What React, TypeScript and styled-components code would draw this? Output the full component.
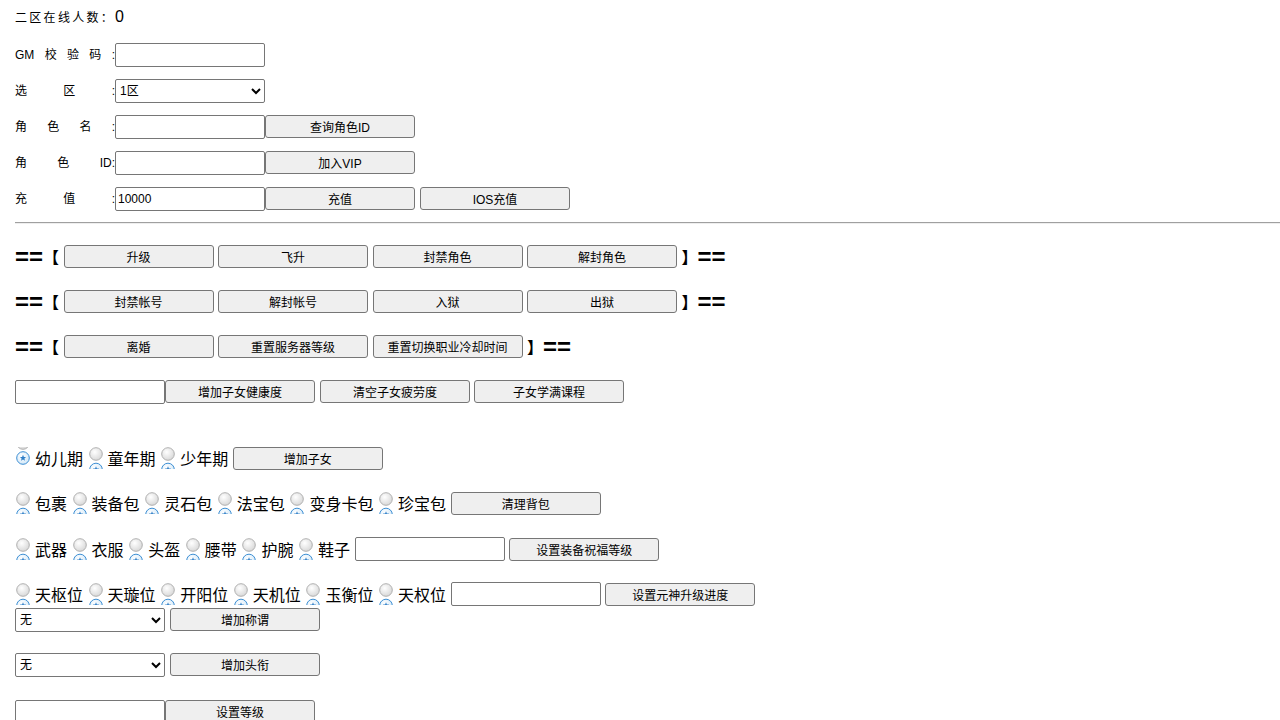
import React from "react";
import styled, { createGlobalStyle } from "styled-components";

const GlobalStyle = createGlobalStyle`
  body {
    margin: 0;
    background: #fff;
    color: #000;
    font-family: "Liberation Sans", "Noto Sans CJK SC", sans-serif;
  }
`;

const Page = styled.div`
  padding-left: 15px;
  width: 1265px;
`;

const Title = styled.div`
  padding-top: 8px;
  height: 20px;
  display: flex;
  align-items: baseline;
  font-size: 12px;
  letter-spacing: 2.3px;
`;

const Count = styled.span`
  font-size: 16px;
  letter-spacing: 0;
`;

const Row = styled.div<{ $top: number; $gap?: number }>`
  margin-top: ${(p) => p.$top}px;
  height: 24px;
  display: flex;
  align-items: flex-start;
  gap: ${(p) => p.$gap ?? 0}px;
`;

const Label = styled.div`
  width: 100px;
  align-self: center;
  display: flex;
  align-items: baseline;
  justify-content: space-between;
  font-size: 12px;
  line-height: 16px;
`;

const TextInput = styled.input`
  box-sizing: border-box;
  width: 150px;
  height: 24px;
  border: 1px solid #767676;
  border-radius: 2px;
  padding: 1px 2px;
  font-size: 12px;
  font-family: "Liberation Sans", "Noto Sans CJK SC", sans-serif;
  color: #000;
  background: #fff;
`;

const Select = styled.select`
  box-sizing: border-box;
  width: 150px;
  height: 24px;
  border: 1px solid #767676;
  border-radius: 2px;
  font-size: 12px;
  font-family: "Liberation Sans", "Noto Sans CJK SC", sans-serif;
  color: #000;
  background: #fff;
`;

const Button = styled.button<{ $ml?: number }>`
  box-sizing: border-box;
  width: 150px;
  height: 23px;
  margin-left: ${(p) => p.$ml ?? 0}px;
  border: 1px solid #767676;
  border-radius: 3px;
  background: #efefef;
  color: #000;
  padding: 0;
  font-size: 12px;
  font-family: "Liberation Sans", "Noto Sans CJK SC", sans-serif;
`;

const Divider = styled.div`
  margin-top: 11px;
  border-top: 1px solid #a0a0a0;
  border-bottom: 1px solid #eeeeee;
`;

const Mark = styled.span`
  display: inline-flex;
  align-items: center;
  height: 23px;
  white-space: pre;
`;

const Equals = styled.span`
  font-size: 24px;
  font-weight: bold;
  font-family: "Liberation Sans", sans-serif;
  line-height: 23px;
`;

const Bracket = styled.span`
  font-size: 16px;
  font-weight: bold;
  font-family: "Noto Sans CJK SC", sans-serif;
  line-height: 23px;
`;

const RadioRow = styled.div<{ $top: number }>`
  margin-top: ${(p) => p.$top}px;
  height: 24px;
  display: flex;
  align-items: center;
  gap: 4.6px;
  font-size: 16px;
  line-height: 20px;
  font-family: "Noto Sans CJK SC", sans-serif;
`;

const Option = styled.label`
  display: inline-flex;
  align-items: center;
  gap: 4px;
`;

function RadioIcon({ checked }: { checked?: boolean }) {
  const grayY = checked ? -4 : 7;
  const blueY = checked ? 11 : 22.5;
  return (
    <svg width="16" height="22" viewBox="0 0 16 22">
      <defs>
        <radialGradient id="rg" cx="0.4" cy="0.35" r="0.7">
          <stop offset="0" stopColor="#ffffff" />
          <stop offset="1" stopColor="#d6d6d6" />
        </radialGradient>
        <radialGradient id="rb" cx="0.4" cy="0.35" r="0.7">
          <stop offset="0" stopColor="#ffffff" />
          <stop offset="1" stopColor="#cfe6f7" />
        </radialGradient>
      </defs>
      <circle cx="8" cy={grayY} r="6.3" fill="url(#rg)" stroke="#b0b0b0" strokeWidth="1" />
      <circle cx="8" cy={blueY} r="6.3" fill="url(#rb)" stroke="#3d8fd4" strokeWidth="1" />
      <polygon
        transform={`translate(8 ${blueY})`}
        points="0,-3.2 0.9,-1 3.1,-1 1.4,0.5 2,2.8 0,1.4 -2,2.8 -1.4,0.5 -3.1,-1 -0.9,-1"
        fill="#2f7fc8"
      />
    </svg>
  );
}

function Radio({ label, checked }: { label: string; checked?: boolean }) {
  return (
    <Option>
      <RadioIcon checked={checked} />
      {label}
    </Option>
  );
}

function FormLabel({ parts }: { parts: string[] }) {
  return (
    <Label>
      {parts.map((p, i) => (
        <span key={i}>{p}</span>
      ))}
    </Label>
  );
}

function BracketRow({ top, names }: { top: number; names: string[] }) {
  return (
    <Row $top={top} $gap={4.5}>
      <Mark>
        <Equals>==</Equals>
        <Bracket>【</Bracket>
      </Mark>
      {names.map((n) => (
        <Button key={n}>{n}</Button>
      ))}
      <Mark>
        <Bracket>】</Bracket>
        <Equals>==</Equals>
      </Mark>
    </Row>
  );
}

export default function App() {
  return (
    <Page>
      <GlobalStyle />
      <Title>
        二区在线人数：<Count>0</Count>
      </Title>

      <Row $top={15}>
        <FormLabel parts={["GM", "校", "验", "码", ":"]} />
        <TextInput />
      </Row>
      <Row $top={12}>
        <FormLabel parts={["选", "区", ":"]} />
        <Select defaultValue="1">
          <option value="1">1区</option>
          <option value="2">2区</option>
        </Select>
      </Row>
      <Row $top={12}>
        <FormLabel parts={["角", "色", "名", ":"]} />
        <TextInput />
        <Button>查询角色ID</Button>
      </Row>
      <Row $top={12}>
        <FormLabel parts={["角", "色", "ID:"]} />
        <TextInput />
        <Button>加入VIP</Button>
      </Row>
      <Row $top={12}>
        <FormLabel parts={["充", "值", ":"]} />
        <TextInput defaultValue="10000" />
        <Button>充值</Button>
        <Button $ml={5}>IOS充值</Button>
      </Row>

      <Divider />

      <BracketRow top={21} names={["升级", "飞升", "封禁角色", "解封角色"]} />
      <BracketRow top={21} names={["封禁帐号", "解封帐号", "入狱", "出狱"]} />
      <BracketRow top={21} names={["离婚", "重置服务器等级", "重置切换职业冷却时间"]} />

      <Row $top={21}>
        <TextInput />
        <Button>增加子女健康度</Button>
        <Button $ml={5}>清空子女疲劳度</Button>
        <Button $ml={4}>子女学满课程</Button>
      </Row>

      <RadioRow $top={42}>
        <Radio label="幼儿期" checked />
        <Radio label="童年期" />
        <Radio label="少年期" />
        <Button>增加子女</Button>
      </RadioRow>
      <RadioRow $top={21}>
        <Radio label="包裹" />
        <Radio label="装备包" />
        <Radio label="灵石包" />
        <Radio label="法宝包" />
        <Radio label="变身卡包" />
        <Radio label="珍宝包" />
        <Button>清理背包</Button>
      </RadioRow>
      <RadioRow $top={22}>
        <Radio label="武器" />
        <Radio label="衣服" />
        <Radio label="头盔" />
        <Radio label="腰带" />
        <Radio label="护腕" />
        <Radio label="鞋子" />
        <TextInput />
        <Button>设置装备祝福等级</Button>
      </RadioRow>
      <RadioRow $top={21}>
        <Radio label="天枢位" />
        <Radio label="天璇位" />
        <Radio label="开阳位" />
        <Radio label="天机位" />
        <Radio label="玉衡位" />
        <Radio label="天权位" />
        <TextInput />
        <Button>设置元神升级进度</Button>
      </RadioRow>

      <Row $top={2} $gap={5}>
        <Select defaultValue="none">
          <option value="none">无</option>
        </Select>
        <Button>增加称谓</Button>
      </Row>
      <Row $top={21} $gap={5}>
        <Select defaultValue="none">
          <option value="none">无</option>
        </Select>
        <Button>增加头衔</Button>
      </Row>
      <Row $top={23}>
        <TextInput />
        <Button>设置等级</Button>
      </Row>
    </Page>
  );
}
